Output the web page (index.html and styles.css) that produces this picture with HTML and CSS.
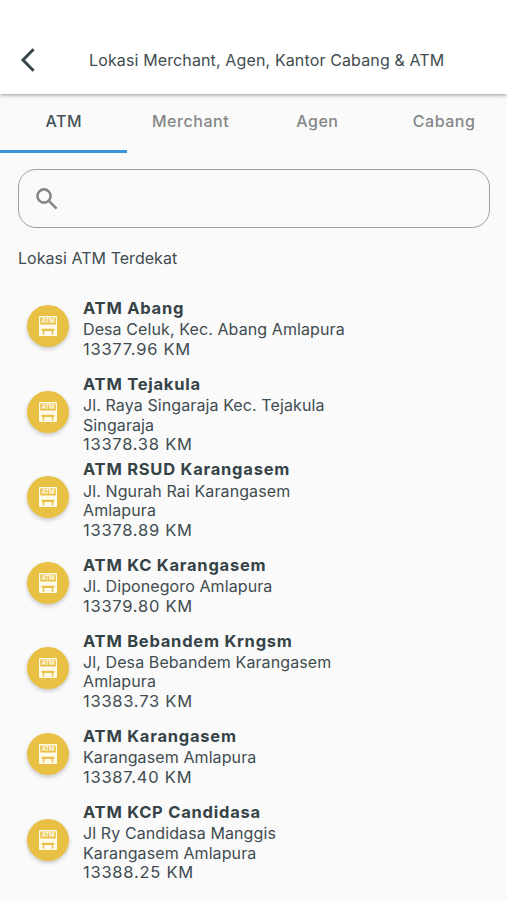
FILE: index.html
```html
<!DOCTYPE html>
<html lang="id">
<head>
<meta charset="utf-8">
<title>Lokasi ATM</title>
<link rel="stylesheet" href="styles.css">
</head>
<body>
<header class="bar">
  <svg class="back" viewBox="0 0 16 26"><path d="M13.6 2.2L3 13L13.6 23.8"/></svg>
  <h1>Lokasi Merchant, Agen, Kantor Cabang &amp; ATM</h1>
</header>
<nav class="tabs">
  <a class="active">ATM</a><a>Merchant</a><a>Agen</a><a>Cabang</a>
</nav>
<main>
  <div class="search">
    <svg viewBox="0 0 22 22"><circle cx="8" cy="8" r="6.6"/><path d="M12.8 12.8L20.6 20.6"/></svg>
  </div>
  <h2>Lokasi ATM Terdekat</h2>
  <ul>
    <li><div><h3>ATM Abang</h3><p>Desa Celuk, Kec. Abang Amlapura</p><p class="km">13377.96 KM</p></div></li>
    <li><div><h3>ATM Tejakula</h3><p>Jl. Raya Singaraja Kec. Tejakula<br>Singaraja</p><p class="km">13378.38 KM</p></div></li>
    <li><div><h3>ATM RSUD Karangasem</h3><p>Jl. Ngurah Rai Karangasem<br>Amlapura</p><p class="km">13378.89 KM</p></div></li>
    <li><div><h3>ATM KC Karangasem</h3><p>Jl. Diponegoro Amlapura</p><p class="km">13379.80 KM</p></div></li>
    <li><div><h3>ATM Bebandem Krngsm</h3><p>Jl, Desa Bebandem Karangasem<br>Amlapura</p><p class="km">13383.73 KM</p></div></li>
    <li><div><h3>ATM Karangasem</h3><p>Karangasem Amlapura</p><p class="km">13387.40 KM</p></div></li>
    <li><div><h3>ATM KCP Candidasa</h3><p>Jl Ry Candidasa Manggis<br>Karangasem Amlapura</p><p class="km">13388.25 KM</p></div></li>
  </ul>
</main>
<script src="script.js"></script>
</body>
</html>
```
FILE: styles.css
```css
* { box-sizing: border-box; margin: 0; padding: 0; }
body { background: #fafafa; color: #3f4c50; font-family: Inter, "Liberation Sans", sans-serif; height: 900px; overflow: hidden; }
.atm-text { font: 700 6px Inter, sans-serif; fill: #fffbea; }
.bar { height: 94px; padding: 26px 0 0 20px; background: #fff; display: flex; align-items: center; box-shadow: 0 1px 4px rgba(0,0,0,.4); position: relative; }
.back { width: 16px; height: 26px; fill: none; stroke: #37464b; stroke-width: 3; }
.bar h1 { margin-left: 53px; font-size: 16px; font-weight: 400; letter-spacing: .13px; white-space: nowrap; }
.tabs { height: 58.5px; display: grid; grid-template-columns: repeat(4, 1fr); }
.tabs a { padding: 16.4px 0 0 1px; text-align: center; font-size: 16px; line-height: 22px; font-weight: 500; letter-spacing: .55px; color: #858787; }
.tabs .active { color: #465357; border-bottom: 3px solid #3994dc; }
main { padding: 16.5px 17px 0 18px; }
.search { height: 59px; border: 1px solid #a0a0a0; border-radius: 18px; padding: 18px 17px; }
.search svg { display: block; width: 22px; height: 22px; fill: none; stroke: #878787; stroke-width: 2.6; }
h2 { margin-top: 19px; font-size: 16px; line-height: 22px; font-weight: 400; letter-spacing: .04px; }
ul { list-style: none; margin-top: 16.8px; }
li { height: 85.6px; display: flex; align-items: center; padding-left: 9px; }
.badge { width: 42px; height: 42px; margin: -5px 14px 0 0; border-radius: 50%; background: #e8c144; display: flex; align-items: center; justify-content: center; box-shadow: 0 2px 4px rgba(0,0,0,.2); }
.badge svg { width: 18px; height: 20px; }
h3 { font-size: 16.5px; line-height: 21.6px; font-weight: 650; letter-spacing: .76px; color: #354347; white-space: nowrap; }
h3 + p { padding-top: .7px; }
li p { font-size: 16px; line-height: 19.5px; letter-spacing: .1px; white-space: nowrap; }
li .km { font-size: 16.5px; letter-spacing: .75px; }
```
FILE: script.js
```js
// Every location row carries the same ATM machine badge.
const badge = `<span class="badge"><svg viewBox="0 0 18 20">
  <path fill="#fffbea" fill-rule="evenodd" d="M1 0H17Q18 0 18 1V19Q18 20 17 20H1Q0 20 0 19V1Q0 0 1 0ZM1.2 1.4V8.6H16.8V1.4ZM2.6 12.8V14.8H3.8V18.8H5.2V15H12.8V18.8H14.2V14.8H15.4V12.8Z"/>
  <text x="2.4" y="7.2" textLength="13.2" class="atm-text">ATM</text>
</svg></span>`;
document.querySelectorAll("li").forEach(li => li.insertAdjacentHTML("afterbegin", badge));
```
